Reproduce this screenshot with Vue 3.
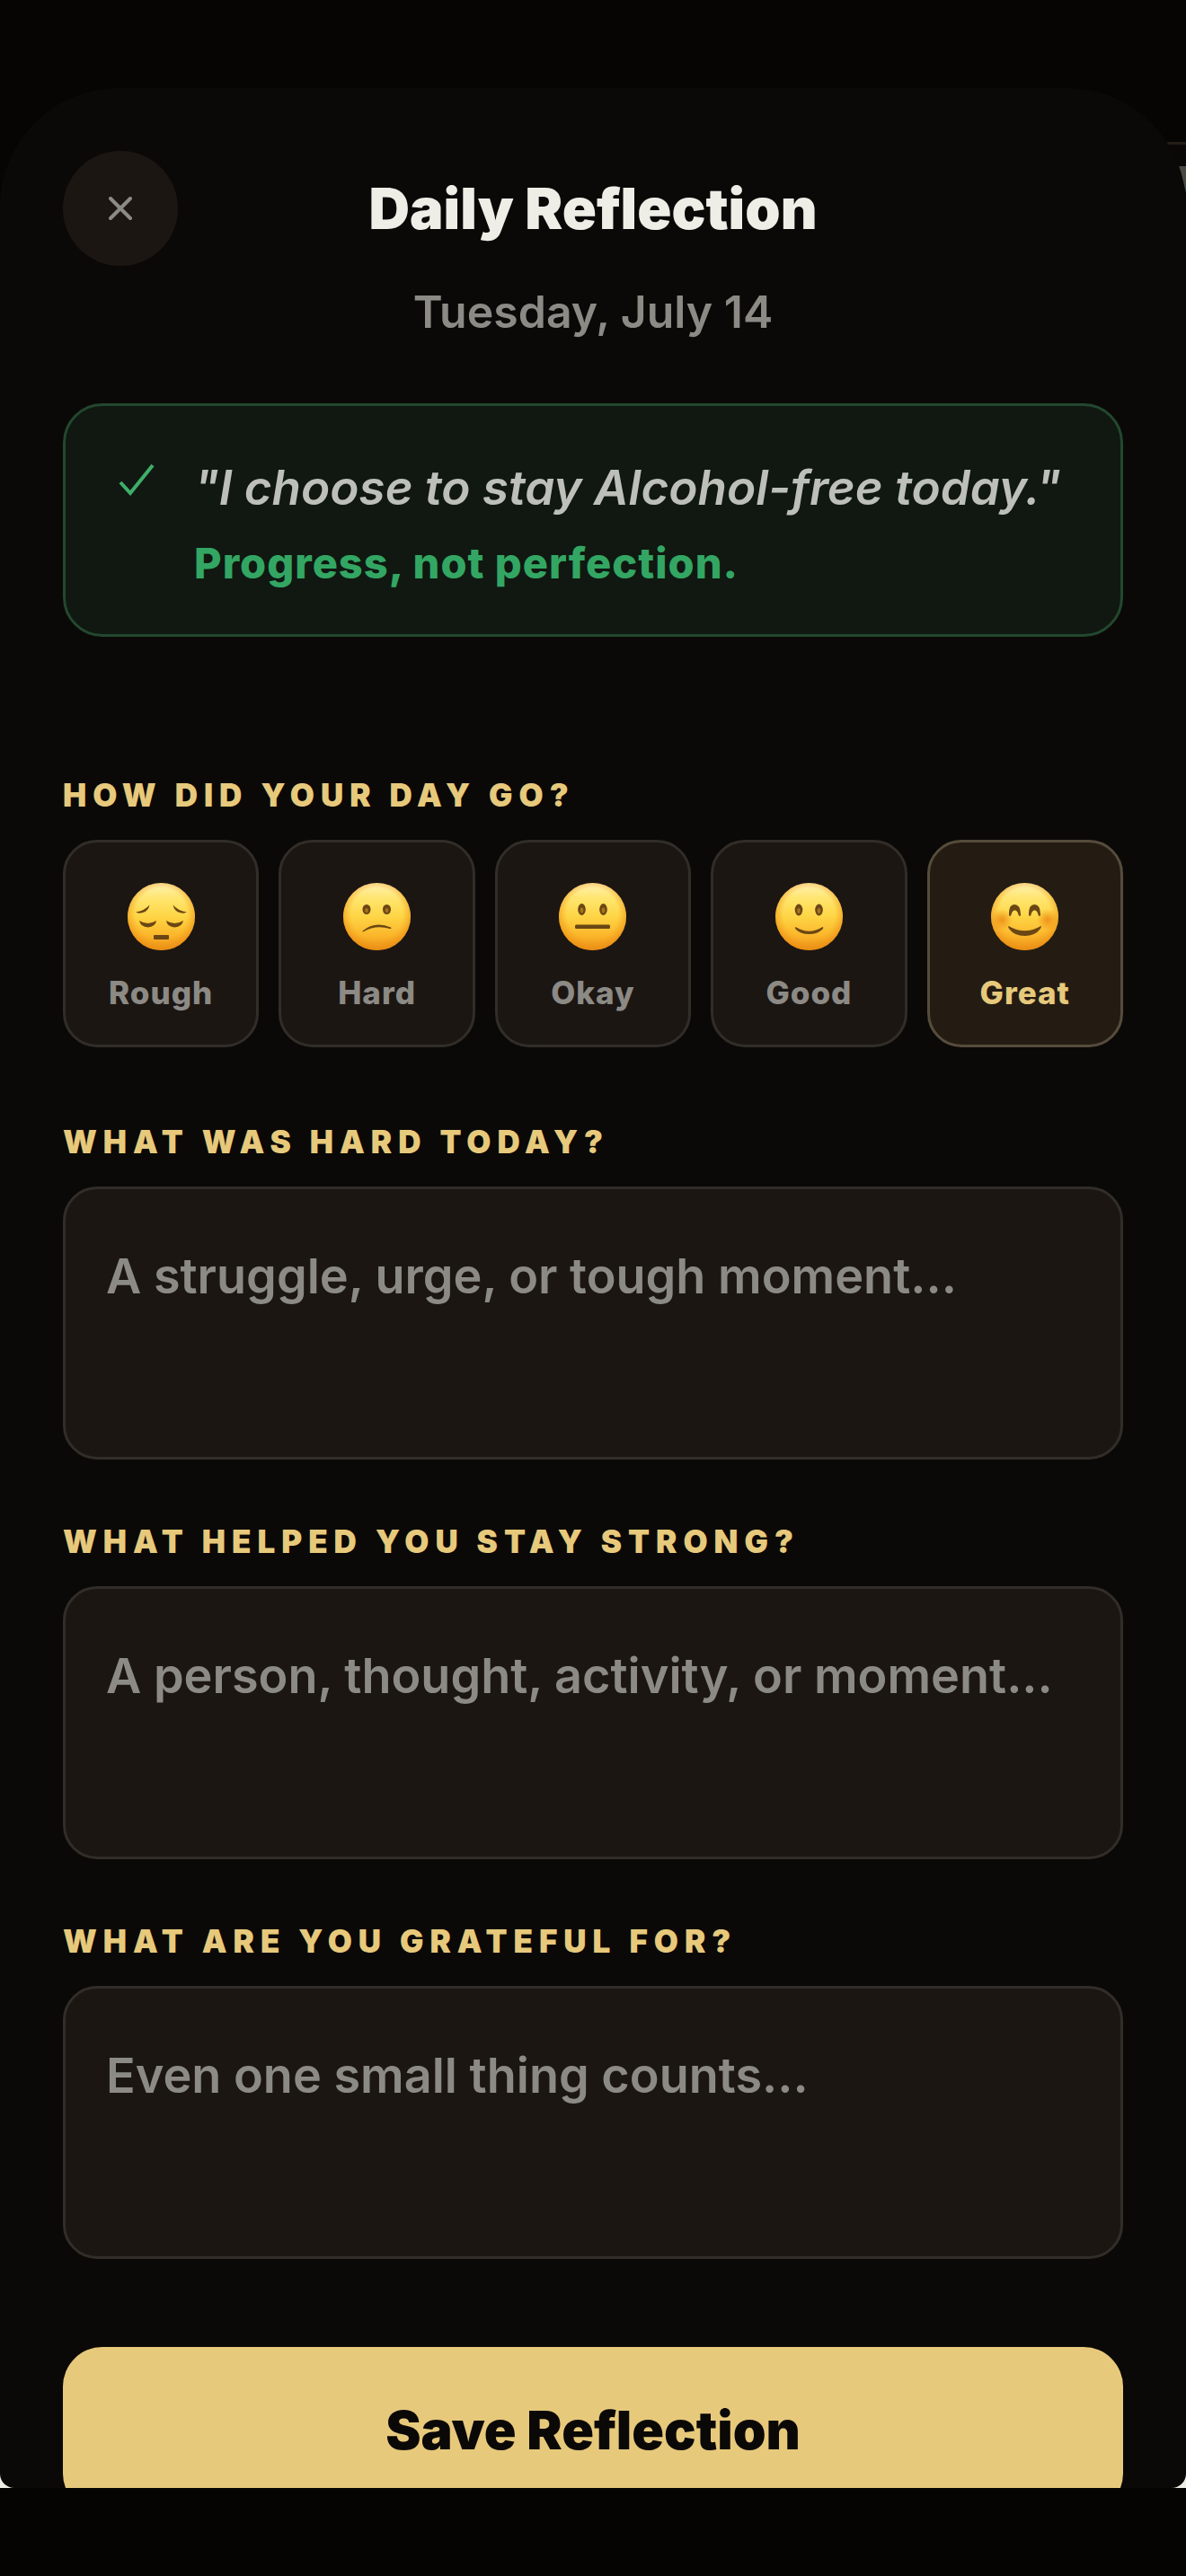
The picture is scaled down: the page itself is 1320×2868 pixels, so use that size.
<script setup>
  import { ref, reactive } from "vue";

  const moods = [
    { id: "rough", label: "Rough" },
    { id: "hard", label: "Hard" },
    { id: "okay", label: "Okay" },
    { id: "good", label: "Good" },
    { id: "great", label: "Great" },
  ];

  const prompts = [
    { id: "struggle", label: "What was hard today?", placeholder: "A struggle, urge, or tough moment..." },
    { id: "helped", label: "What helped you stay strong?", placeholder: "A person, thought, activity, or moment..." },
    { id: "grateful", label: "What are you grateful for?", placeholder: "Even one small thing counts..." },
  ];

  const open = ref(true);
  const selectedMood = ref("great");
  const answers = reactive({ struggle: "", helped: "", grateful: "" });

  const emit = defineEmits(["save"]);

  function save() {
    emit("save", { mood: selectedMood.value, ...answers });
  }
</script>

<template>
  <div class="screen">
    <div class="viewport">
      <div class="behind" aria-hidden="true">W</div>
      <main v-if="open" class="sheet">
        <header class="header">
          <button class="close" type="button" aria-label="Close" @click="open = false">
            <svg viewBox="0 0 26 26" class="close-icon">
              <path d="M2 2 24 24M24 2 2 24" />
            </svg>
          </button>
          <h1 class="title">Daily Reflection</h1>
        </header>
        <p class="date">Tuesday, July 14</p>

        <section class="pledge">
          <svg viewBox="0 0 40 36" class="check">
            <path d="M2 21 13 33 38 2" />
          </svg>
          <div>
            <p class="quote">"I choose to stay Alcohol-free today."</p>
            <p class="motto">Progress, not perfection.</p>
          </div>
        </section>

        <form class="form" @submit.prevent="save">
          <section class="field mood-field">
            <h2 id="mood-label" class="label">How did your day go?</h2>
            <div class="moods" role="group" aria-labelledby="mood-label">
              <button
                v-for="mood in moods"
                :key="mood.id"
                type="button"
                :class="selectedMood === mood.id ? 'mood selected' : 'mood'"
                :aria-pressed="selectedMood === mood.id"
                @click="selectedMood = mood.id">
                <svg viewBox="0 0 75 75" class="face" aria-hidden="true">
                  <defs>
                    <linearGradient :id="`skin-${mood.id}`" x1="0" y1="0" x2="0" y2="1">
                      <stop offset="0" stop-color="#fff0b4" />
                      <stop offset="0.22" stop-color="#ffe671" />
                      <stop offset="0.5" stop-color="#fed545" />
                      <stop offset="0.78" stop-color="#fbb62b" />
                      <stop offset="1" stop-color="#ec9418" />
                    </linearGradient>
                    <radialGradient :id="`rim-${mood.id}`" cx="0.5" cy="0.46" r="0.54">
                      <stop offset="0.7" stop-color="#f39a1a" stop-opacity="0" />
                      <stop offset="1" stop-color="#e98a12" stop-opacity="0.75" />
                    </radialGradient>
                    <radialGradient :id="`blush-${mood.id}`">
                      <stop offset="0" stop-color="#ea8310" stop-opacity="0.8" />
                      <stop offset="1" stop-color="#ea8310" stop-opacity="0" />
                    </radialGradient>
                  </defs>
                  <circle cx="37.5" cy="37.5" r="37.5" :fill="`url(#skin-${mood.id})`" />
                  <circle cx="37.5" cy="37.5" r="37.5" :fill="`url(#rim-${mood.id})`" />
                  <template v-if="mood.id === 'rough'">
                    <path class="ink" d="M9 32.500Q19 31 24.500 24.500Q23 31.500 17 33Q12 34.500 9 32.500Z" />
                    <path class="ink" d="M66 32.500Q56 31 50.500 24.500Q52 31.500 58 33Q63 34.500 66 32.500Z" />
                    <path class="ink" d="M13 42Q22.500 48 32 42Q31 49 22.500 49.500Q14.500 49 13 42Z" />
                    <path class="ink" d="M43 42Q52.500 48 62 42Q60.500 49 52.500 49.500Q44 49 43 42Z" />
                    <rect class="ink" x="29" y="58" width="17" height="5" rx="1" />
                  </template>
                  <template v-else-if="mood.id === 'hard'">
                    <ellipse class="ink" cx="26" cy="29.500" rx="4.500" ry="5.500" />
                    <ellipse class="ink" cx="48.500" cy="29.500" rx="4.500" ry="5.500" />
                    <ellipse class="glint" cx="26" cy="30.500" rx="1.800" ry="2.600" />
                    <ellipse class="glint" cx="48.500" cy="30.500" rx="1.800" ry="2.600" />
                    <path class="ink" d="M21.500 53.500Q35 42 53 49.500Q54.500 51.500 52 51Q36 46.500 23 54Q21 55 21.500 53.500Z" />
                  </template>
                  <template v-else-if="mood.id === 'okay'">
                    <ellipse class="ink" cx="25.500" cy="29.500" rx="4.300" ry="6.500" />
                    <ellipse class="ink" cx="49.500" cy="29.500" rx="4.300" ry="6.500" />
                    <ellipse class="glint" cx="25.500" cy="30.500" rx="1.800" ry="3" />
                    <ellipse class="glint" cx="49.500" cy="30.500" rx="1.800" ry="3" />
                    <rect class="ink" x="18" y="46.500" width="39" height="4.500" rx="1.500" />
                  </template>
                  <template v-else-if="mood.id === 'good'">
                    <ellipse class="ink" cx="26" cy="30" rx="4.300" ry="6.500" />
                    <ellipse class="ink" cx="48.500" cy="30" rx="4.300" ry="6.500" />
                    <ellipse class="glint" cx="26" cy="31" rx="1.800" ry="3" />
                    <ellipse class="glint" cx="48.500" cy="31" rx="1.800" ry="3" />
                    <path class="ink" d="M22.500 49Q37.500 58.500 52.500 49Q54 49.500 52.500 51.500Q47 57 37.500 57Q28 57 22.500 51.500Q21.500 49.500 22.500 49Z" />
                  </template>
                  <template v-else>
                    <circle cx="12" cy="41" r="12" :fill="`url(#blush-${mood.id})`" />
                    <circle cx="63" cy="41" r="12" :fill="`url(#blush-${mood.id})`" />
                    <path class="ink" d="M20 36Q19.500 24 26 24Q33 24 33 36Q31.500 38 30.500 35.500Q29.500 30.500 26.500 30.500Q23.500 30.500 22.500 35.500Q21.500 38 20 36Z" />
                    <path class="ink" d="M42 36Q41.500 24 48.500 24Q55 24 55 36Q53.500 38 52.500 35.500Q51.500 30.500 48.500 30.500Q45.500 30.500 44.500 35.500Q43.500 38 42 36Z" />
                    <path class="ink" d="M19.500 48Q37.500 58.500 55.500 48Q56.500 48.500 55 51Q49 59 37.500 59Q26 59 20 51Q18.500 48.500 19.500 48Z" />
                  </template>
                </svg>
                <span class="mood-name">{{ mood.label }}</span>
              </button>
            </div>
          </section>

          <section v-for="prompt in prompts" :key="prompt.id" class="field">
            <label class="label" :for="prompt.id">{{ prompt.label }}</label>
            <textarea
              :id="prompt.id"
              v-model="answers[prompt.id]"
              class="answer"
              :placeholder="prompt.placeholder"></textarea>
          </section>

          <button class="save" type="submit">Save Reflection</button>
        </form>
      </main>
    </div>
  </div>
</template>

<style>
  body {
    background: #050402;
  }
</style>

<style scoped>
  .screen {
    box-sizing: border-box;
    height: 100vh;
    padding-bottom: 98px;
    overflow: hidden;
    background: #050402;
    font-family: Inter, "Liberation Sans", sans-serif;
  }

  .viewport {
    position: relative;
    box-sizing: border-box;
    height: 100%;
    padding-top: 98px;
    overflow: hidden;
    background: linear-gradient(#060503 50%, #eeede6 50%);
  }

  /* sliver of the page that the sheet covers */
  .behind {
    position: absolute;
    top: 158px;
    right: 0;
    box-sizing: border-box;
    width: 60px;
    height: 400px;
    padding: 20px 0 0 51px;
    overflow: hidden;
    border-top: 3px solid #241d17;
    background: #090806;
    color: #4b4843;
    font-size: 48px;
    font-weight: 800;
    line-height: 44px;
  }

  .sheet {
    position: relative;
    box-sizing: border-box;
    height: 100%;
    padding: 70px 70px 0;
    overflow: hidden;
    border-radius: 132px 132px 16px 16px;
    background: #0b0907;
  }

  .header {
    display: grid;
    grid-template-columns: 128px 1fr 128px;
    align-items: center;
  }

  .close {
    display: flex;
    align-items: center;
    justify-content: center;
    width: 128px;
    height: 128px;
    padding: 0;
    border: 0;
    border-radius: 50%;
    background: #1c1613;
    cursor: pointer;
  }

  .close-icon {
    width: 26px;
    height: 26px;
    fill: none;
    stroke: #8c8a85;
    stroke-width: 4;
    stroke-linecap: round;
  }

  .title {
    margin: 0;
    color: #eeede6;
    font-size: 63px;
    font-weight: 900;
    line-height: 76px;
    text-align: center;
  }

  .date {
    margin: 21px 0 0;
    color: #8c8a85;
    font-size: 50px;
    font-weight: 600;
    line-height: 60px;
    text-align: center;
  }

  .pledge {
    display: flex;
    gap: 44px;
    margin-top: 72px;
    padding: 52px 57px 49px 59px;
    border: 3px solid #23482f;
    border-radius: 44px;
    background: #101811;
  }

  .check {
    flex: none;
    width: 40px;
    height: 36px;
    margin-top: 12px;
    fill: none;
    stroke: #3fae6a;
    stroke-width: 4;
  }

  .quote {
    margin: 0;
    color: #bdbfb9;
    font-size: 53px;
    font-style: italic;
    font-weight: 600;
    line-height: 78px;
  }

  .motto {
    margin: 15px 0 0;
    color: #33a663;
    font-size: 47px;
    font-weight: 800;
    line-height: 60px;
    letter-spacing: 1px;
  }

  .form {
    display: flex;
    flex-direction: column;
    gap: 69px;
    margin-top: 154px;
  }

  .field {
    display: flex;
    flex-direction: column;
    gap: 28px;
  }

  .mood-field {
    margin-bottom: 14px;
  }

  .label {
    margin: 0;
    color: #e7c97c;
    font-size: 35px;
    font-weight: 900;
    line-height: 44px;
    letter-spacing: 7px;
    text-transform: uppercase;
  }

  .moods {
    display: grid;
    grid-template-columns: repeat(5, 1fr);
    gap: 22px;
  }

  .mood {
    display: flex;
    flex-direction: column;
    align-items: center;
    gap: 25px;
    padding: 45px 0 36px;
    border: 3px solid #312d28;
    border-radius: 38px;
    background: #1c1613;
    color: #8c8a85;
    font-family: inherit;
    font-size: 35px;
    font-weight: 800;
    line-height: 44px;
    cursor: pointer;
  }

  .mood.selected {
    border-color: #564c3c;
    background: #241c13;
    color: #e7c97c;
  }

  .face {
    width: 75px;
    height: 75px;
  }

  .ink {
    fill: #6b4714;
  }

  .glint {
    fill: #a8741f;
  }

  .mood-name {
    letter-spacing: 1px;
  }

  .answer {
    box-sizing: border-box;
    width: 100%;
    height: 304px;
    padding: 58px 45px;
    border: 3px solid #312d28;
    border-radius: 38px;
    background: #1c1613;
    color: #eeede6;
    font-family: inherit;
    font-size: 54px;
    font-weight: 600;
    line-height: 78px;
    resize: none;
  }

  .answer::placeholder {
    color: #8c8a85;
    opacity: 1;
  }

  .save {
    height: 185px;
    flex: none;
    margin-top: 29px;
    padding: 0;
    border: 0;
    border-radius: 44px;
    background: #e7c97c;
    color: #0b0907;
    font-family: inherit;
    font-size: 59px;
    font-weight: 900;
    cursor: pointer;
  }
</style>
